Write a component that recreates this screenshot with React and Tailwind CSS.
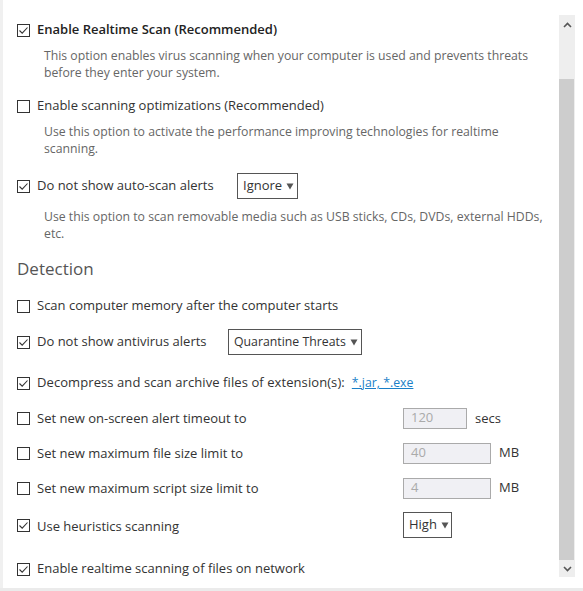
import React from "react";

const font = { fontFamily: '"Open Sans", "Noto Sans", sans-serif' };

function Box({ checked }) {
  return (
    <span className="inline-flex h-[13px] w-[13px] shrink-0 items-center justify-center border border-[#333] bg-white">
      {checked && (
        <svg width="11" height="11" viewBox="0 0 11 11">
          <path d="M1.5 5.5 L4.2 8.2 L9.5 2.5" fill="none" stroke="#333" strokeWidth="1.1" />
        </svg>
      )}
    </span>
  );
}

function Select({ label, w, size = "text-[13px]" }) {
  return (
    <span className={`inline-flex h-[26px] shrink-0 items-center justify-between whitespace-nowrap border border-[#555] bg-white pl-[5px] pr-[4px] text-[#333] ${size} ${w}`}>
      <span>{label}</span>
      <svg width="8" height="7" viewBox="0 0 8 7" className="ml-[4px] shrink-0">
        <path d="M0.5 0.5 H7.5 L4 6.5 Z" fill="#555" />
      </svg>
    </span>
  );
}

function Input({ value, w }) {
  return (
    <span className={`inline-flex h-[21px] items-center border border-[#aaa] bg-[#f0f0f4] pl-[7px] text-[13px] text-[#aaa] ${w}`}>
      {value}
    </span>
  );
}

function Row({ checked, children, h = "h-[20px]", mt, bold }) {
  return (
    <div className={`flex items-center ${h} ${mt}`}>
      <Box checked={checked} />
      <div className={`ml-[7px] flex flex-1 items-center whitespace-nowrap text-[13px] ${bold ? "font-semibold text-[#222]" : "text-[#333]"}`}>
        {children}
      </div>
    </div>
  );
}

function Desc({ children, mt }) {
  return (
    <p className={`ml-[27px] whitespace-nowrap text-[12.25px] leading-[17px] text-[#666] ${mt}`}>{children}</p>
  );
}

export default function App() {
  return (
    <div className="flex h-[591px] w-[583px] flex-col bg-white" style={font}>
      <div className="flex flex-1">
        <div className="w-[3px] bg-[#f0f0f0]" />
        <div className="flex-1 pl-[14px] pt-[20px]">
          <Row checked bold>Enable Realtime Scan (Recommended)</Row>
          <Desc mt="mt-[7px]">This option enables virus scanning when your computer is used and prevents threats<br />before they enter your system.</Desc>
          <Row mt="mt-[15px]">Enable scanning optimizations (Recommended)</Row>
          <Desc mt="mt-[7px]">Use this option to activate the performance improving technologies for realtime<br />scanning.</Desc>
          <Row checked h="h-[26px]" mt="mt-[16px]">
            <span className="w-[200px]">Do not show auto-scan alerts</span>
            <Select label="Ignore" w="w-[61px]" />
          </Row>
          <Desc mt="mt-[9px]">Use this option to scan removable media such as USB sticks, CDs, DVDs, external HDDs,<br />etc.</Desc>
          <div className="mt-[15px] h-[24px] text-[17px] leading-[24px] text-[#555]">Detection</div>
          <Row mt="mt-[15px]">Scan computer memory after the computer starts</Row>
          <Row checked h="h-[26px]" mt="mt-[13px]">
            <span className="w-[191px]">Do not show antivirus alerts</span>
            <Select label="Quarantine Threats" w="w-[134px]" size="text-[12.3px]" />
          </Row>
          <Row checked mt="mt-[18px]">
            <span className="tracking-[0.08px]">Decompress and scan archive files of extension(s):</span>
            <span className="ml-[7px] text-[12.3px] text-[#1a7fc8] underline">*.jar, *.exe</span>
          </Row>
          <Row h="h-[22px]" mt="mt-[14px]">
            <span className="w-[366px] pt-[2px]">Set new on-screen alert timeout to</span>
            <Input value="120" w="w-[64px]" />
            <span className="ml-[8px] pt-[2px]">secs</span>
          </Row>
          <Row h="h-[22px]" mt="mt-[13px]">
            <span className="w-[366px] pt-[2px]">Set new maximum file size limit to</span>
            <Input value="40" w="w-[88px]" />
            <span className="ml-[8px]">MB</span>
          </Row>
          <Row h="h-[22px]" mt="mt-[13px]">
            <span className="w-[366px] pt-[2px]">Set new maximum script size limit to</span>
            <Input value="4" w="w-[88px]" />
            <span className="ml-[8px]">MB</span>
          </Row>
          <Row checked h="h-[26px]" mt="mt-[13px]">
            <span className="w-[366px] pt-[4px]">Use heuristics scanning</span>
            <Select label="High" w="w-[49px]" />
          </Row>
          <Row checked mt="mt-[21px]">Enable realtime scanning of files on network</Row>
        </div>
        <div className="mt-[15px] mb-[11px] mr-[8px] flex w-[16px] flex-col bg-[#eeeeee]">
          <div className="flex h-[19px] items-center justify-center">
            <svg width="9" height="6" viewBox="0 0 9 6"><path d="M1 5 L4.5 1.5 L8 5" fill="none" stroke="#555" strokeWidth="1.6" /></svg>
          </div>
          <div className="mt-[45px] mr-[1px] flex-1 bg-[#cdcdcd]" />
          <div className="flex h-[17px] items-center justify-center">
            <svg width="9" height="6" viewBox="0 0 9 6"><path d="M1 1 L4.5 4.5 L8 1" fill="none" stroke="#555" strokeWidth="1.6" /></svg>
          </div>
        </div>
      </div>
      <div className="h-[3px] bg-[#ebebeb]" />
    </div>
  );
}
